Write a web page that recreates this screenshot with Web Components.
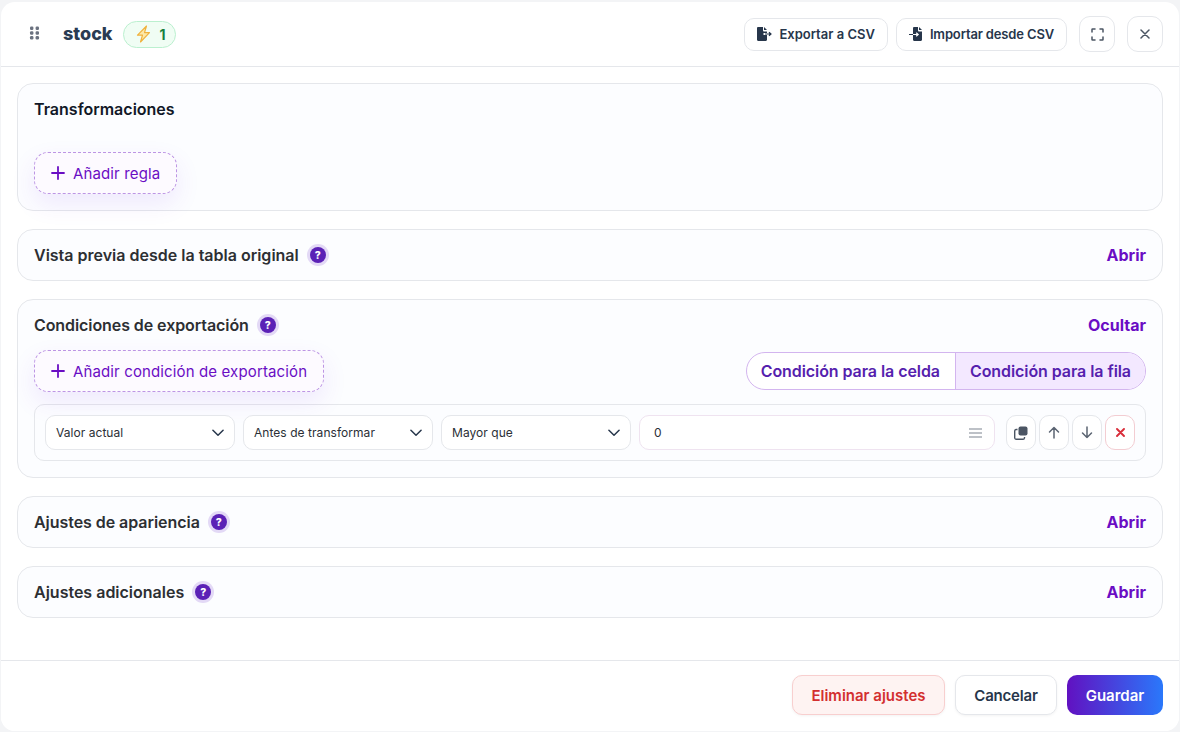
<!DOCTYPE html>
<html lang="es"><head><meta charset="utf-8"><title>stock</title>
<style>
html,body{margin:0;height:100%;background:#f3f4f6}
body{font-family:Inter,"Liberation Sans",sans-serif;overflow:hidden}
</style></head><body>
<x-modal>
  <x-header slot="header"></x-header>
  <x-card title-text="Transformaciones" dark tall>
    <x-add label="Añadir regla" style="margin-top:33px"></x-add>
  </x-card>
  <x-card title-text="Vista previa desde la tabla original" help action="Abrir"></x-card>
  <x-card title-text="Condiciones de exportación" help action="Ocultar" open ls="-.08px">
    <x-cond-toolbar></x-cond-toolbar>
    <x-cond-row></x-cond-row>
  </x-card>
  <x-card title-text="Ajustes de apariencia" help action="Abrir" ls="-.05px"></x-card>
  <x-card title-text="Ajustes adicionales" help action="Abrir"></x-card>
  <x-footer slot="footer"></x-footer>
</x-modal>
<script>
const def=(n,html)=>{customElements.define(n,class extends HTMLElement{
  connectedCallback(){ if(this.shadowRoot) return; const r=this.attachShadow({mode:'open'}); r.innerHTML=typeof html==='function'?html(this):html; }
});};
def('x-modal',`<style>
:host{display:flex;flex-direction:column;box-sizing:border-box;margin:2px 1px;height:729px;background:#fff;border-radius:14px;overflow:hidden}
.body{flex:1;box-sizing:border-box;padding:16px 16px 0;display:flex;flex-direction:column;gap:18px;min-height:0}
</style><slot name="header"></slot><div class="body"><slot></slot></div><slot name="footer"></slot>`);
const outline='background:#fff;border:1px solid #e5e7eb;box-sizing:border-box;border-radius:10px;display:flex;align-items:center;justify-content:center;';
def('x-header',`<style>
:host{display:flex;align-items:center;height:65px;box-sizing:border-box;border-bottom:1px solid #e5e7eb;padding:0 16px 0 28px;flex:none}
.grip{width:11px;height:14px;color:#6b7280;margin-right:23px;display:block;margin-top:-2px}
.name{font-size:18px;font-weight:800;color:#2a3b52;margin-top:-2px}
.badge{margin-left:10px;height:27px;width:53px;box-sizing:border-box;border:1px solid #bbf0cf;border-radius:14px;background:#f0fdf4;display:flex;align-items:center;padding-left:11px;gap:8px;color:#15803d;font-size:14px;font-weight:700}
.sp{flex:1}
.btn{${outline}height:33px;font-size:13px;font-weight:600;color:#27364b;padding:0 12px}
.ic{${outline}width:36px;height:36px;border-radius:11px;color:#4b5563}
svg{display:block}
</style>
<svg class="grip" viewBox="0 0 11 14" fill="currentColor"><rect x="1" y="0.5" width="3.4" height="3.4" rx="1.2"/><rect x="6.6" y="0.5" width="3.4" height="3.4" rx="1.2"/><rect x="1" y="5.3" width="3.4" height="3.4" rx="1.2"/><rect x="6.6" y="5.3" width="3.4" height="3.4" rx="1.2"/><rect x="1" y="10.1" width="3.4" height="3.4" rx="1.2"/><rect x="6.6" y="10.1" width="3.4" height="3.4" rx="1.2"/></svg>
<span class="name">stock</span>
<span class="badge"><svg width="17" height="18" viewBox="0 0 17 18" fill="#fde9a8" stroke="#f0b23e" stroke-width="1.2" stroke-linejoin="round"><path d="M11.5 1 2.5 10.2h5L5.5 17l9-9.4h-5z"/></svg><span>1</span></span>
<span class="sp"></span>
<span class="btn" style="gap:7px"><svg width="15" height="14" viewBox="0 0 15 14" fill="#27364b"><path d="M0 1.200C0 .5.5 0 1.200 0H6v3.600c0 .5.400.9.900.9H10V6H6.500v2H10v4.800c0 .7-.5 1.200-1.200 1.200H1.200C.5 14 0 13.500 0 12.800z"/><path d="M7 0l3 3H7z"/><path d="M8 7h5.500M12 5.200 14 7l-2 1.800" fill="none" stroke="#27364b" stroke-width="1.200"/></svg><span>Exportar a CSV</span></span>
<span class="btn" style="margin-left:8px;gap:6px;letter-spacing:-.15px"><svg width="15" height="14" viewBox="0 0 15 14" fill="#27364b"><path d="M4 1.200C4 .5 4.500 0 5.200 0H9v3.600c0 .5.400.9.900.9H13v8.300c0 .7-.5 1.200-1.200 1.200H5.200C4.500 14 4 13.500 4 12.800z"/><path d="M10 0l3 3h-3z"/><path d="M0 7.500h4" fill="none" stroke="#27364b" stroke-width="1.200"/><path d="M4 7.500h5M7.200 5.700 9.200 7.500l-2 1.800" fill="none" stroke="#fff" stroke-width="1.200"/></svg><span>Importar desde CSV</span></span>
<span class="ic" style="margin-left:12px"><svg width="13" height="13" viewBox="0 0 13 13" fill="none" stroke="currentColor" stroke-width="1.500" stroke-linecap="round"><path d="M1 4V1.500C1 1.200 1.200 1 1.500 1H4M9 1h2.500c.3 0 .5.200.5.500V4M12 9v2.500c0 .3-.2.500-.5.500H9M4 12H1.500c-.3 0-.5-.2-.5-.5V9"/></svg></span>
<span class="ic" style="margin-left:12px"><svg width="10" height="10" viewBox="0 0 10 10" fill="none" stroke="currentColor" stroke-width="1.500" stroke-linecap="round"><path d="M1 1l8 8M9 1 1 9"/></svg></span>`);
def('x-card',h=>{
 const t=h.getAttribute('title-text'),a=h.getAttribute('action'),help=h.hasAttribute('help'),dark=h.hasAttribute('dark'),open=h.hasAttribute('open'),tall=h.hasAttribute('tall'),ls=h.getAttribute('ls')||'0';
 return `<style>
:host{display:block;flex:none;box-sizing:border-box;background:#fcfdff;border:1px solid #e5e7eb;border-radius:16px;padding:15px 16px 16px;${!open&&!tall?'height:52px;':''}}
.top{display:flex;align-items:center;height:20px;font-size:16px;font-weight:600;color:${dark?'#111827':'#2d2f33'}}
.q{width:16px;height:16px;border-radius:50%;background:#5b21b6;color:#fff;font-size:10.500px;font-weight:800;display:flex;align-items:center;justify-content:center;margin-left:11px;box-shadow:0 0 0 3px #e3d9f6}
.sp{flex:1}.a{color:#6a0dc4;font-weight:700;font-size:16px}
</style><div class="top"><span style="letter-spacing:${ls}">${t}</span>${help?'<span class="q">?</span>':''}<span class="sp"></span>${a?`<span class="a">${a}</span>`:''}</div><slot></slot>`;
});
def('x-add',h=>`<style>
:host{display:inline-flex;align-items:center;box-sizing:border-box;height:42px;padding:0 16px;gap:8px;border:1px dashed #bd95e4;border-radius:14px;background:#fdfaff;color:#6a0dc4;font-size:15px;letter-spacing:.13px;font-weight:400;box-shadow:0 10px 24px rgba(124,58,237,.1);white-space:nowrap}
</style><svg width="14" height="14" viewBox="0 0 14 14" fill="none" stroke="currentColor" stroke-width="1.800" stroke-linecap="round"><path d="M7 1v12M1 7h12"/></svg><span>${h.getAttribute('label')}</span>`);
def('x-cond-toolbar',`<style>
:host{display:flex;align-items:center;justify-content:space-between;margin-top:15px}
.seg{display:flex;height:38px;box-sizing:border-box;border:1px solid #d3b5ef;border-radius:19px;overflow:hidden;font-size:16px;font-weight:600;letter-spacing:-.07px;color:#561fae;background:#fff}
.seg span{display:flex;align-items:center;padding:0 15px 0 14px}
.seg .on{background:#f3e8ff;border-left:1px solid #d3b5ef;padding:0 14px}
</style><x-add label="Añadir condición de exportación"></x-add><div class="seg"><span>Condición para la celda</span><span class="on">Condición para la fila</span></div>`);
const chev='<svg width="12" height="8" viewBox="0 0 13 8" fill="none" stroke="#27364b" stroke-width="1.600" stroke-linecap="round" stroke-linejoin="round"><path d="M1 1l5.500 5.500L12 1"/></svg>';
def('x-select',h=>`<style>
:host{display:flex;align-items:center;justify-content:space-between;box-sizing:border-box;flex:none;height:35px;border:1px solid #e5e7eb;border-radius:10px;background:#fff;padding:0 10px 0 10px;font-size:12px;letter-spacing:.05px;color:#2b2f36}
</style><span>${h.getAttribute('v')}</span>${chev}`);
def('x-tool',h=>`<style>
:host{display:flex;align-items:center;justify-content:center;box-sizing:border-box;width:30px;height:35px;flex:none;background:#fff;border:1px solid ${h.hasAttribute('danger')?'#f3cdd2':'#e5e7eb'};border-radius:10px}
svg{display:block}
</style><slot></slot>`);
def('x-cond-row',`<style>
:host{display:flex;align-items:center;margin-top:12px;box-sizing:border-box;height:57px;border:1px solid #e5e7eb;border-radius:10px;padding:0 10px;gap:8px;background:#fcfdff}
.inp{flex:1;height:35px;box-sizing:border-box;border:1px solid #efe3f0;border-radius:10px;background:#fff;display:flex;align-items:center;justify-content:space-between;padding:0 12px 0 14px;font-size:12px;color:#2b2f36}
.tools{display:flex;gap:3px;margin-left:3px}
</style>
<x-select v="Valor actual" style="width:190px"></x-select>
<x-select v="Antes de transformar" style="width:190px"></x-select>
<x-select v="Mayor que" style="width:190px"></x-select>
<div class="inp"><span>0</span><svg width="13" height="10" viewBox="0 0 13 10" stroke="#a8adb5" stroke-width="1.300"><path d="M0 1h13M0 5h13M0 9h13"/></svg></div>
<div class="tools">
<x-tool><svg width="14" height="14" viewBox="0 0 14 14"><rect x="4.500" y="0.500" width="9" height="9" rx="2" fill="#4b5563"/><path d="M3.500 3.500H2A1.500 1.500 0 0 0 .7 5v7A1.500 1.500 0 0 0 2 13.300h7A1.500 1.500 0 0 0 10.500 12v-1" fill="none" stroke="#4b5563" stroke-width="1.400"/></svg></x-tool>
<x-tool><svg width="12" height="13" viewBox="0 0 12 13" fill="none" stroke="#5b6472" stroke-width="1.500" stroke-linecap="round" stroke-linejoin="round"><path d="M6 12V1.500M1.500 6 6 1.500 10.500 6"/></svg></x-tool>
<x-tool><svg width="12" height="13" viewBox="0 0 12 13" fill="none" stroke="#5b6472" stroke-width="1.500" stroke-linecap="round" stroke-linejoin="round"><path d="M6 1v10.500M1.500 7 6 11.500 10.500 7"/></svg></x-tool>
<x-tool danger><svg width="9" height="9" viewBox="0 0 9 9" fill="none" stroke="#d92d3a" stroke-width="1.900" stroke-linecap="round"><path d="M1 1l7 7M8 1 1 8"/></svg></x-tool>
</div>`);
def('x-footer',`<style>
:host{display:flex;align-items:center;justify-content:flex-end;flex:none;height:71px;box-sizing:border-box;border-top:1px solid #e5e7eb;padding:0 16px 2px 0;gap:10px;background:#fff;font-size:15px;font-weight:600}
span{height:40px;box-sizing:border-box;border-radius:10px;display:flex;align-items:center;justify-content:center}
.del{width:153px;background:#fef3f2;border:1px solid #f8cfcf;color:#d32f2f;box-shadow:0 1px 3px rgba(0,0,0,.05)}
.can{width:102px;background:#fff;border:1px solid #e5e7eb;color:#27364b;letter-spacing:-.2px;box-shadow:0 1px 3px rgba(0,0,0,.05)}
.sav{width:96px;background:linear-gradient(90deg,#6111c1,#2a78fb);color:#fff}
</style><span class="del">Eliminar ajustes</span><span class="can">Cancelar</span><span class="sav">Guardar</span>`);
</script>
</body></html>
